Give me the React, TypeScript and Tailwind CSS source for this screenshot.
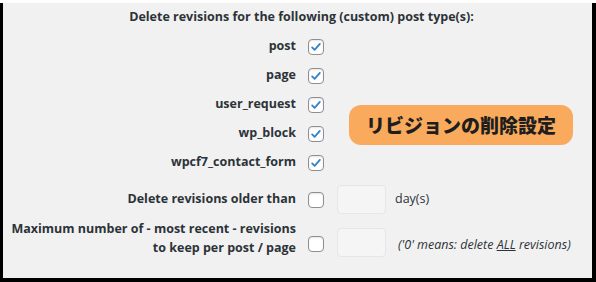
import React from 'react';

const postTypes = ['post', 'page', 'user_request', 'wp_block', 'wpcf7_contact_form'];

const Checkbox = ({ checked }: { checked?: boolean }) => (
  <span className="flex h-4 w-4 shrink-0 items-center justify-center rounded-[4px] border border-[#8c8f94] bg-white shadow-[inset_0_1px_2px_rgba(0,0,0,0.1)]">
    {checked && (
      <svg width="14" height="14" viewBox="0 0 20 20">
        <path d="M4.5 10.5l3.5 3.5 7.5-8.5" fill="none" stroke="#3582c4" strokeWidth="2.6" strokeLinecap="round" strokeLinejoin="round" />
      </svg>
    )}
  </span>
);

const NumberBox = () => (
  <span className="block h-[29px] w-[49px] shrink-0 rounded-[4px] border border-[#e6e6e6] bg-[#f5f5f5]" />
);

export default function App() {
  return (
    <div className="h-[282px] w-[596px] bg-black">
      <div
        className="relative ml-[3px] mt-[3px] h-[275px] w-[589px] bg-[#f1f1f1] text-[12.5px] text-[#2c3338]"
        style={{ fontFamily: '"Open Sans", "Noto Sans", sans-serif' }}
      >
        <div className="pt-[4px] text-center font-bold leading-5">
          <span className="ml-[8px]">Delete revisions for the following (custom) post type(s):</span>
        </div>

        <div className="mt-[5px] flex flex-col">
          {postTypes.map((t) => (
            <div key={t} className="flex h-[29px] items-center">
              <div className="w-[293px] text-right font-bold">{t}</div>
              <div className="ml-[12px]">
                <Checkbox checked />
              </div>
            </div>
          ))}
        </div>

        <div className="mt-[8px] flex h-[29px] items-center">
          <div className="w-[293px] text-right font-bold">Delete revisions older than</div>
          <div className="ml-[12px]">
            <Checkbox />
          </div>
          <div className="ml-[13px]">
            <NumberBox />
          </div>
          <span className="ml-[9px]">day(s)</span>
        </div>

        <div className="mt-[5px] flex items-start">
          <div className="w-[293px] whitespace-nowrap text-right font-bold leading-[19px]">
            Maximum number of - most recent - revisions
            <br />
            to keep per post / page
          </div>
          <div className="ml-[12px] mt-[17px]">
            <Checkbox />
          </div>
          <div className="ml-[13px] mt-[9px]">
            <NumberBox />
          </div>
          <span className="ml-[12px] mt-[17px] whitespace-nowrap italic">
            ('0' means: delete <span className="underline">ALL</span> revisions)
          </span>
        </div>

        <div
          className="absolute left-[346px] top-[102px] flex h-[40px] w-[224px] items-center justify-center rounded-[12px] bg-[#f9aa5c] text-[19px] font-black text-[#1e1e1e]"
          style={{ fontFamily: '"Noto Sans CJK JP", sans-serif' }}
        >
          リビジョンの削除設定
        </div>
      </div>
    </div>
  );
}
